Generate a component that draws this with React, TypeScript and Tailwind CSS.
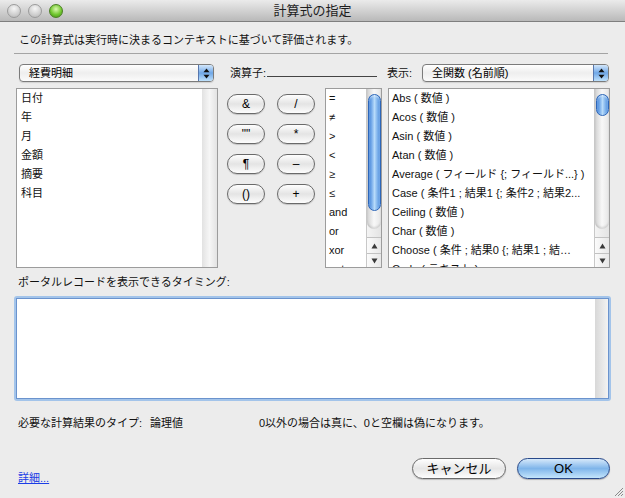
import React from 'react';

const fields = ['日付', '年', '月', '金額', '摘要', '科目'];
const ops = ['=', '≠', '>', '<', '≥', '≤', 'and', 'or', 'xor', 'not'];
const funcs = [
  'Abs ( 数値 )',
  'Acos ( 数値 )',
  'Asin ( 数値 )',
  'Atan ( 数値 )',
  'Average ( フィールド {; フィールド...} )',
  'Case ( 条件1 ; 結果1 {; 条件2 ; 結果2...',
  'Ceiling ( 数値 )',
  'Char ( 数値 )',
  'Choose ( 条件 ; 結果0 {; 結果1 ; 結…',
  'Code ( テキスト )',
];
const keys = ['&', '/', '""', '*', '¶', '–', '()', '+'];

// little double arrow used by the popup menus
const PopArrows = () => (
  <svg width="7" height="11" viewBox="0 0 7 11">
    <path d="M3.5 0.5 L6.5 4.2 H0.5 Z" fill="#101010" />
    <path d="M3.5 10.5 L6.5 6.8 H0.5 Z" fill="#101010" />
  </svg>
);

const Tri = ({ down }: { down?: boolean }) => (
  <svg width="7" height="6" viewBox="0 0 7 6">
    {down ? <path d="M0.5 0.5 H6.5 L3.5 5.5 Z" fill="#3a3a3a" /> : <path d="M3.5 0.5 L6.5 5.5 H0.5 Z" fill="#3a3a3a" />}
  </svg>
);

const Popup = ({ label, className }: { label: string; className: string }) => (
  <div
    className={`flex h-[18px] overflow-hidden rounded-[4px] border border-[#7b7b7b] bg-gradient-to-b from-white via-[#eeeeee] to-[#fbfbfb] shadow-[0_1px_1px_rgba(0,0,0,0.12)] ${className}`}
  >
    <span className="flex-1 pl-[9px] text-[11px] leading-[16px] text-black">{label}</span>
    <span className="flex w-[15px] items-center justify-center border-l border-[#5877ad] bg-gradient-to-b from-[#d3e7fa] via-[#6fa7e7] to-[#bfe1fb]">
      <PopArrows />
    </span>
  </div>
);

const ScrollBar = ({ thumb }: { thumb: string }) => (
  <div className="flex w-[15px] flex-col border-l border-[#c8c8c8] bg-gradient-to-r from-[#f4f4f4] to-[#e4e4e4]">
    <div className="flex-1 rounded-b-[8px] bg-gradient-to-r from-[#d2d2d2] via-[#f8f8f8] to-[#e6e6e6] pt-[5px] shadow-[inset_0_-2px_2px_rgba(0,0,0,0.12)]">
      <div
        className={`mx-auto w-[13px] rounded-full border border-[#2d66b8] bg-gradient-to-r from-[#3a7fd8] via-[#b7dbfa] to-[#4a8ddd] shadow-[inset_0_1px_2px_rgba(255,255,255,0.6)] ${thumb}`}
      />
    </div>
    <div className="h-[8px]" />
    <div className="flex h-[16px] items-center justify-center border-t border-[#c2c2c2] bg-gradient-to-r from-[#fbfbfb] to-[#e8e8e8]">
      <Tri />
    </div>
    <div className="flex h-[14px] items-center justify-center border-t border-[#c2c2c2] bg-gradient-to-r from-[#fbfbfb] to-[#e8e8e8]">
      <Tri down />
    </div>
  </div>
);

const AquaKey = ({ label }: { label: string }) => (
  <div className="flex h-[20px] w-[38px] items-center justify-center rounded-full border border-[#6a6a6a] bg-gradient-to-b from-[#fefefe] via-[#e4e4e4] to-[#fdfdfd] text-[12px] leading-none text-black shadow-[0_1px_1px_rgba(0,0,0,0.18)]">
    {label}
  </div>
);

export default function App() {
  return (
    <div className="relative h-[498px] w-[625px] overflow-hidden bg-[#ececec] font-['Liberation_Sans','Noto_Sans_CJK_JP',sans-serif] text-[#111]">
      {/* title bar */}
      <div className="flex h-[22px] items-center border-b border-[#7f7f7f] bg-gradient-to-b from-[#ebebeb] via-[#d2d2d2] to-[#b9b9b9]">
        <div className="flex w-[70px] items-center gap-[7px] pl-[7px]">
          <span className="h-[14px] w-[14px] rounded-full border border-[#9b9b9b] bg-[radial-gradient(circle_at_50%_30%,#f6f6f6,#cfcfcf_60%,#b4b4b4)]" />
          <span className="h-[14px] w-[14px] rounded-full border border-[#9b9b9b] bg-[radial-gradient(circle_at_50%_30%,#f6f6f6,#cfcfcf_60%,#b4b4b4)]" />
          <span className="h-[14px] w-[14px] rounded-full border border-[#4b7f24] bg-[radial-gradient(circle_at_50%_35%,#dcf9b0,#72c830_55%,#3f8c14)]" />
        </div>
        <div className="flex-1 text-center text-[13px] text-[#1e1e1e]">計算式の指定</div>
        <div className="w-[70px]" />
      </div>

      <div className="pl-[16px] pr-[14px]">
        <div className="ml-[3px] mt-[11px] h-[14px] text-[11px] leading-[14px]">
          この計算式は実行時に決まるコンテキストに基づいて評価されます。
        </div>
        <div className="-ml-[2px] mr-[3px] mt-[6px] border-t border-[#a4a4a4]" />

        {/* popups row */}
        <div className="mt-[10px] flex h-[18px] items-center text-[11px]">
          <Popup label="経費明細" className="ml-[3px] w-[195px]" />
          <span className="ml-[16px] w-[37px] leading-[14px]">演算子:</span>
          <span className="h-[13px] w-[110px] self-start border-b border-[#444]" />
          <span className="ml-[10px] w-[35px] leading-[14px]">表示:</span>
          <Popup label="全関数 (名前順)" className="w-[187px]" />
        </div>

        {/* lists row */}
        <div className="mt-[6px] flex h-[180px] text-[11px]">
          <div className="flex w-[202px] border border-[#9c9c9c] bg-white">
            <div className="flex-1 pl-[4px]">
              {fields.map((f) => (
                <div key={f} className="h-[19px] leading-[19px]">
                  {f}
                </div>
              ))}
            </div>
            <div className="w-[15px] bg-gradient-to-r from-[#e2e2e2] via-[#f6f6f6] to-[#e3e3e3]" />
          </div>

          <div className="ml-[9px] grid h-fit grid-cols-[38px_38px] gap-x-[12px] gap-y-[10px] pt-[6px]">
            {keys.map((k) => (
              <AquaKey key={k} label={k} />
            ))}
          </div>

          <div className="ml-[10px] flex w-[57px] overflow-hidden border border-[#9c9c9c] bg-white">
            <div className="flex-1 overflow-hidden pl-[3px]">
              {ops.map((o) => (
                <div key={o} className="h-[19px] leading-[19px]">
                  {o}
                </div>
              ))}
            </div>
            <ScrollBar thumb="h-[117px]" />
          </div>

          <div className="ml-[6px] flex w-[222px] overflow-hidden border border-[#9c9c9c] bg-white">
            <div className="flex-1 overflow-hidden whitespace-nowrap pl-[3px]">
              {funcs.map((f) => (
                <div key={f} className="h-[19px] leading-[19px]">
                  {f}
                </div>
              ))}
            </div>
            <ScrollBar thumb="h-[22px]" />
          </div>
        </div>

        <div className="ml-[2px] mt-[7px] h-[14px] text-[11px] leading-[14px]">
          ポータルレコードを表示できるタイミング:
        </div>

        {/* calculation area */}
        <div className="-ml-[2px] mt-[7px] h-[105px] w-[597px] rounded-[3px] bg-[#a3c4ea] p-[2px]">
          <div className="flex h-full border border-[#6b93cd] bg-white">
            <div className="flex-1" />
            <div className="w-[13px] bg-gradient-to-r from-[#d8d8d8] to-[#f3f3f3]" />
          </div>
        </div>

        <div className="ml-[2px] mt-[15px] flex h-[14px] text-[11px] leading-[14px]">
          <span className="w-[132px]">必要な計算結果のタイプ:</span>
          <span className="w-[109px]">論理値</span>
          <span>0以外の場合は真に、0と空欄は偽になります。</span>
        </div>

        <div className="mt-[28px] flex h-[21px] items-start">
          <span className="ml-[2px] mt-[13px] text-[11px] leading-[14px] text-[#1b3ee6] underline">詳細...</span>
          <div className="ml-auto mr-[1px] flex gap-[11px]">
            <div className="flex h-[21px] w-[94px] items-center justify-center rounded-full border border-[#6a6a6a] bg-gradient-to-b from-[#fefefe] via-[#e6e6e6] to-[#fdfdfd] text-[13px] text-black shadow-[0_1px_1px_rgba(0,0,0,0.2)]">
              キャンセル
            </div>
            <div className="flex h-[21px] w-[93px] items-center justify-center rounded-full border border-[#28498a] bg-gradient-to-b from-[#d6e9fa] via-[#7fb5ea] to-[#c4e5fb] text-[13px] text-black shadow-[0_1px_1px_rgba(0,0,0,0.25)]">
              OK
            </div>
          </div>
        </div>
      </div>

      {/* resize grip */}
      <svg className="absolute bottom-[1px] right-[1px]" width="11" height="11" viewBox="0 0 11 11">
        <path d="M10 2 L2 10 M10 5 L5 10 M10 8 L8 10" stroke="#8a8a8a" strokeWidth="1" />
      </svg>
    </div>
  );
}
